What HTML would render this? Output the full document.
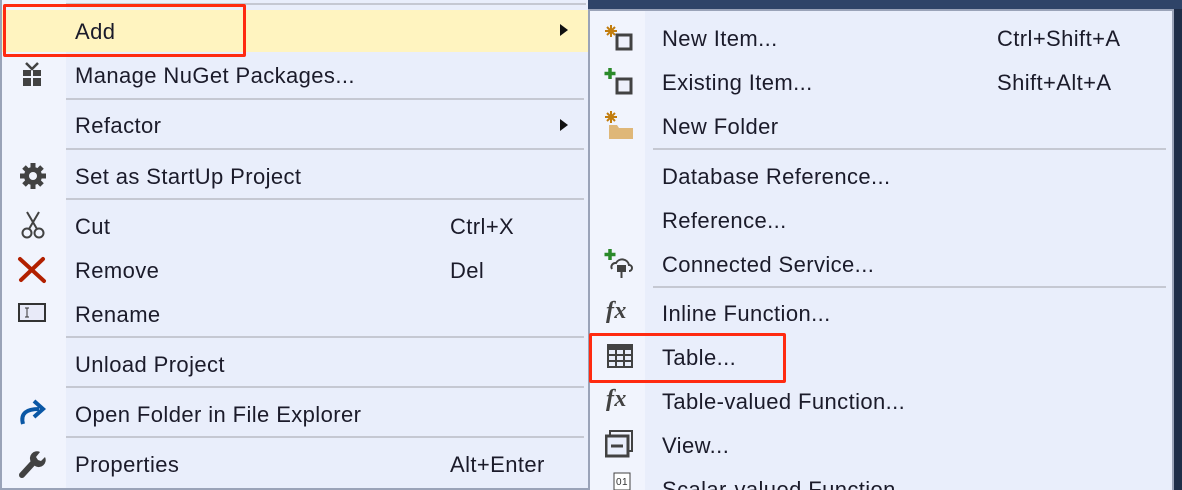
<!DOCTYPE html><html><head><style>
html,body{margin:0;width:1182px;height:490px;overflow:hidden}
body{background:#2f4468;font-family:"Liberation Sans",sans-serif;font-size:22px;letter-spacing:0.4px;color:#1b1b2a;position:relative}
.m{position:absolute;background:#e9eefb;}
.ic{position:absolute;top:0;bottom:0;left:0;background:#f1f4fd}
.t{position:absolute;line-height:24px;white-space:nowrap}
.s{position:absolute;height:2px;background:#c5c8d2}
.i{position:absolute}
</style></head><body>
<div class="m" style="left:0;top:0;width:588px;height:490px;border-left:2px solid #9aa3b8;border-bottom:2px solid #9aa3b8;box-sizing:border-box">
<div class="ic" style="width:64px"></div>
<div style="position:absolute;left:0;top:10px;width:588px;height:42px;background:#fff4c0"></div>
<div class="s" style="left:64px;top:3px;width:520px"></div>
</div>
<div style="position:absolute;left:3px;top:4px;width:237px;height:47px;border:3px solid #ff2a10;border-radius:2px"></div>
<div class="t" style="left:75px;top:20px">Add</div>
<div class="i" style="left:560px;top:24px;width:0;height:0;border-left:8px solid #111;border-top:6px solid transparent;border-bottom:6px solid transparent"></div>
<svg class="i" style="left:22px;top:61px" width="20" height="26"><rect x="1" y="9" width="18" height="16" fill="#424242"/><rect x="9" y="9" width="2" height="16" fill="#f1f4fd"/><rect x="1" y="15" width="18" height="2" fill="#f1f4fd"/><path d="M4 2l6 6 6-6" stroke="#424242" stroke-width="2.5" fill="none"/></svg>
<div class="t" style="left:75px;top:64px">Manage NuGet Packages...</div>
<div class="s" style="left:66px;top:98px;width:518px"></div>
<div class="t" style="left:75px;top:114px">Refactor</div>
<div class="i" style="left:560px;top:119px;border-left:8px solid #111;border-top:6px solid transparent;border-bottom:6px solid transparent"></div>
<div class="s" style="left:66px;top:148px;width:518px"></div>
<svg class="i" style="left:19px;top:162px" width="28" height="28" viewBox="0 0 28 28"><g fill="#424242"><circle cx="14" cy="14" r="9"/><g stroke="#424242" stroke-width="5"><path d="M14 1v26M1 14h26M5 5l18 18M23 5L5 23"/></g></g><circle cx="14" cy="14" r="4" fill="#f1f4fd"/></svg>
<div class="t" style="left:75px;top:165px">Set as StartUp Project</div>
<div class="s" style="left:66px;top:198px;width:518px"></div>
<svg class="i" style="left:20px;top:210px" width="26" height="30"><path d="M7 2l10 17M19 2L9 19" stroke="#424242" stroke-width="2"/><circle cx="7" cy="23" r="4.5" fill="none" stroke="#424242" stroke-width="2"/><circle cx="19" cy="23" r="4.5" fill="none" stroke="#424242" stroke-width="2"/></svg>
<div class="t" style="left:75px;top:215px">Cut</div><div class="t" style="left:450px;top:215px">Ctrl+X</div>
<svg class="i" style="left:17px;top:256px" width="30" height="28"><path d="M3 3l24 22M26 3L4 24" stroke="#b22000" stroke-width="4" stroke-linecap="round"/></svg>
<div class="t" style="left:75px;top:259px">Remove</div><div class="t" style="left:450px;top:259px">Del</div>
<svg class="i" style="left:18px;top:303px" width="28" height="20"><rect x="1" y="1" width="26" height="17" fill="#e8eaf8" stroke="#333" stroke-width="2"/><path d="M7 5h4M9 5v9M7 14h4" stroke="#333"/></svg>
<div class="t" style="left:75px;top:303px">Rename</div>
<div class="s" style="left:66px;top:336px;width:518px"></div>
<div class="t" style="left:75px;top:353px">Unload Project</div>
<div class="s" style="left:66px;top:386px;width:518px"></div>
<svg class="i" style="left:18px;top:398px" width="30" height="28"><path d="M5 26C2 15 9 11 21 11" stroke="#0a57a5" stroke-width="4" fill="none"/><path d="M16 3l9 8-9 8" stroke="#0a57a5" stroke-width="4" fill="none"/></svg>
<div class="t" style="left:75px;top:403px">Open Folder in File Explorer</div>
<div class="s" style="left:66px;top:436px;width:518px"></div>
<svg class="i" style="left:18px;top:450px" width="28" height="28"><path d="M4 25L15 13" stroke="#424242" stroke-width="6" stroke-linecap="round"/><path d="M13 12a7 7 0 0 1 9-10l-4 5 2 3 3 1 4-4a7 7 0 0 1-10 9z" fill="#424242"/></svg>
<div class="t" style="left:75px;top:453px">Properties</div><div class="t" style="left:450px;top:453px">Alt+Enter</div>

<div class="m" style="left:588px;top:9px;width:586px;height:490px;border:2px solid #9aa3b8;box-sizing:border-box">
<div class="ic" style="width:55px"></div></div>
<div style="position:absolute;left:1174px;top:9px;width:8px;height:481px;background:#1f2e48"></div>
<svg class="i" style="left:604px;top:24px" width="30" height="28"><rect x="13" y="11" width="14" height="14" fill="#eef0fb" stroke="#424242" stroke-width="3"/><path d="M7 1v12M1 7h12M3 3l8 8M11 3l-8 8" stroke="#c27d0e" stroke-width="2"/></svg>
<div class="t" style="left:662px;top:27px">New Item...</div><div class="t" style="left:997px;top:27px">Ctrl+Shift+A</div>
<svg class="i" style="left:604px;top:68px" width="30" height="28"><rect x="13" y="11" width="14" height="14" fill="#eef0fb" stroke="#424242" stroke-width="3"/><path d="M6 0v11M0.5 5.5h11" stroke="#2a8a2a" stroke-width="3.5"/></svg>
<div class="t" style="left:662px;top:71px">Existing Item...</div><div class="t" style="left:997px;top:71px">Shift+Alt+A</div>
<svg class="i" style="left:604px;top:110px" width="30" height="30"><path d="M5 15h8l2 3h14v11H5z" fill="#dfb778"/><path d="M7 1v12M1 7h12M3 3l8 8M11 3l-8 8" stroke="#c27d0e" stroke-width="2"/></svg>
<div class="t" style="left:662px;top:115px">New Folder</div>
<div class="s" style="left:653px;top:148px;width:513px"></div>
<div class="t" style="left:662px;top:165px">Database Reference...</div>
<div class="t" style="left:662px;top:209px">Reference...</div>
<svg class="i" style="left:604px;top:249px" width="30" height="30"><path d="M6 0v11M0.5 5.5h11" stroke="#2a8a2a" stroke-width="3.5"/><path d="M8 20a4 4 0 0 1 4-6 7 7 0 0 1 13 2 3 3 0 0 1 0 6" stroke="#424242" stroke-width="2" fill="none"/><path d="M14 17h7v5h-7zM17.5 22v7" stroke="#424242" stroke-width="2" fill="#424242"/></svg>
<div class="t" style="left:662px;top:253px">Connected Service...</div>
<div class="s" style="left:653px;top:286px;width:513px"></div>
<div class="t" style="left:606px;top:299px;font-family:'Liberation Serif',serif;font-style:italic;font-weight:bold;color:#424242;font-size:24px">fx</div>
<div class="t" style="left:662px;top:302px">Inline Function...</div>
<svg class="i" style="left:607px;top:344px" width="26" height="24"><rect x="0" y="0" width="26" height="24" fill="#424242"/><g fill="#e9eefb"><rect x="2" y="6" width="6" height="4"/><rect x="10" y="6" width="6" height="4"/><rect x="18" y="6" width="6" height="4"/><rect x="2" y="12" width="6" height="4"/><rect x="10" y="12" width="6" height="4"/><rect x="18" y="12" width="6" height="4"/><rect x="2" y="18" width="6" height="4"/><rect x="10" y="18" width="6" height="4"/><rect x="18" y="18" width="6" height="4"/></g></svg>
<div style="position:absolute;left:589px;top:333px;width:191px;height:44px;border:3px solid #ff2a10;border-radius:2px"></div>
<div class="t" style="left:662px;top:346px">Table...</div>
<div class="t" style="left:606px;top:387px;font-family:'Liberation Serif',serif;font-style:italic;font-weight:bold;color:#424242;font-size:24px">fx</div>
<div class="t" style="left:662px;top:390px">Table-valued Function...</div>
<svg class="i" style="left:605px;top:430px" width="30" height="28"><rect x="5" y="1" width="22" height="20" fill="none" stroke="#424242" stroke-width="2"/><rect x="1" y="6" width="22" height="20" fill="#e9eefb" stroke="#424242" stroke-width="3"/><path d="M6 16h12" stroke="#424242" stroke-width="3"/></svg>
<div class="t" style="left:662px;top:434px">View...</div>
<svg class="i" style="left:608px;top:472px" width="26" height="18"><rect x="6" y="1" width="16" height="17" fill="#fff" stroke="#424242"/><text x="8" y="13" font-size="10" fill="#333" font-family="Liberation Sans">01</text></svg>
<div class="t" style="left:662px;top:478px">Scalar-valued Function...</div>
</body></html>
